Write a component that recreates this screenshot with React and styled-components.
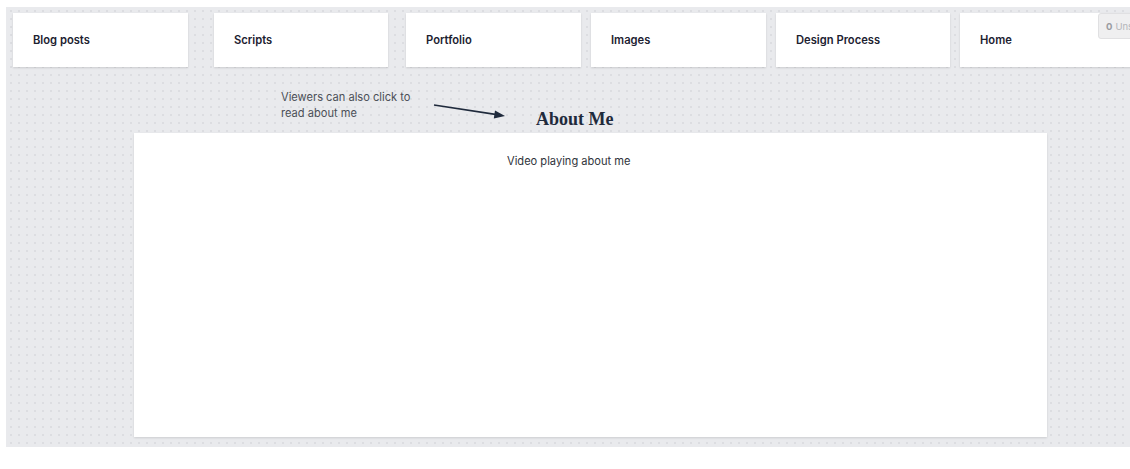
import React from 'react';
import styled, { createGlobalStyle } from 'styled-components';

const GlobalStyle = createGlobalStyle`
  html, body {
    margin: 0;
    padding: 0;
    background: #ffffff;
  }
  body {
    font-family: Inter, 'Liberation Sans', sans-serif;
    width: 1130px;
    height: 469px;
    overflow: hidden;
  }
`;

const boards = [
  { title: 'Blog posts', gap: 0, width: 175 },
  { title: 'Scripts', gap: 26, width: 174 },
  { title: 'Portfolio', gap: 18, width: 175 },
  { title: 'Images', gap: 10, width: 175 },
  { title: 'Design Process', gap: 10, width: 174 },
  { title: 'Home', gap: 10, width: 175 },
];

const App = () => {
  return (
    <>
      <GlobalStyle />
      <Canvas>
        <CardRow>
          {boards.map((b) => (
            <Card key={b.title} $gap={b.gap} $width={b.width}>
              {b.title}
            </Card>
          ))}
        </CardRow>

        <NoteRow>
          <Note>
            Viewers can also click to
            <br />
            read about me
          </Note>
          <Arrow width="76" height="18" viewBox="0 0 76 18">
            <line x1="1" y1="3" x2="64" y2="12.6" stroke="#1f2a3c" strokeWidth="1.6" />
            <path d="M72 14 L62 8.6 L60.8 16.4 Z" fill="#1f2a3c" />
          </Arrow>
          <Heading>About Me</Heading>
        </NoteRow>

        <Panel>
          <PanelText>Video playing about me</PanelText>
        </Panel>

        <SaveBadge>
          <strong>0</strong> Unsaved
        </SaveBadge>
      </Canvas>
    </>
  );
};

const Canvas = styled.div`
  position: relative;
  margin: 7px 0 0 6px;
  width: 1124px;
  height: 440px;
  overflow: hidden;
  background-color: #e9eaed;
  background-image: radial-gradient(circle, #dcdde1 1px, transparent 1.2px);
  background-size: 8px 8px;
  background-position: 1px 0;
  display: flex;
  flex-flow: column nowrap;
  padding-top: 6px;
  box-sizing: border-box;
`;

const CardRow = styled.div`
  display: flex;
  flex-flow: row nowrap;
  padding-left: 7px;
`;

const Card = styled.div`
  flex-shrink: 0;
  width: ${(p) => p.$width}px;
  height: 54px;
  margin-left: ${(p) => p.$gap}px;
  padding-left: 20px;
  box-sizing: border-box;
  display: flex;
  align-items: center;
  background: #ffffff;
  box-shadow: 0 1px 2px rgba(0, 0, 0, 0.13);
  font-size: 11.2px;
  font-weight: 600;
  color: #1c2130;
`;

const NoteRow = styled.div`
  display: flex;
  flex-flow: row nowrap;
  align-items: flex-start;
  height: 45px;
  margin-top: 21px;
  padding-left: 275px;
`;

const Note = styled.div`
  font-size: 11.1px;
  line-height: 16px;
  margin-top: 1px;
  color: #4b4f57;
  width: 146px;
`;

const Arrow = styled.svg`
  flex-shrink: 0;
  margin-top: 14px;
  margin-left: 6px;
`;

const Heading = styled.h2`
  margin: 20px 0 0 27px;
  font-family: 'Liberation Serif', 'DejaVu Serif', serif;
  font-size: 18px;
  font-weight: 700;
  line-height: 22px;
  color: #1f2a3c;
`;

const Panel = styled.div`
  margin-left: 128px;
  width: 913px;
  height: 304px;
  flex-shrink: 0;
  background: #ffffff;
  box-shadow: 0 1px 2px rgba(0, 0, 0, 0.12);
  padding: 20px 0 0 373px;
  box-sizing: border-box;
`;

const PanelText = styled.div`
  font-size: 11.1px;
  line-height: 16px;
  color: #30343c;
`;

const SaveBadge = styled.div`
  position: absolute;
  top: 6px;
  left: 1092px;
  height: 24px;
  padding: 0 7px;
  display: flex;
  align-items: center;
  gap: 3px;
  white-space: nowrap;
  background: #efeff0;
  border: 1px solid #e0e0e2;
  border-radius: 3px;
  font-size: 9.5px;
  color: #b3b5b9;

  strong {
    color: #9a9ca1;
    font-weight: 700;
  }
`;

export default App;
